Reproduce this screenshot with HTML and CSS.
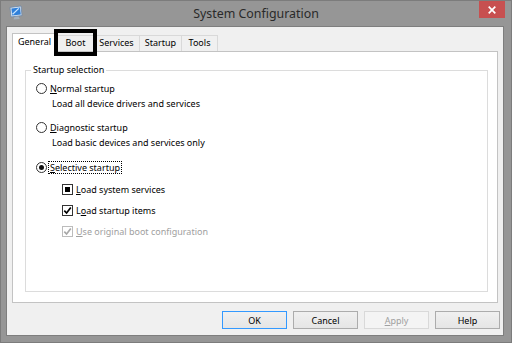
FILE: index.html
```html
<!DOCTYPE html>
<html>
<head>
<meta charset="utf-8">
<title>System Configuration</title>
<link rel="stylesheet" href="styles.css">
</head>
<body>
<div class="window">
  <div class="titlebar">
    <div class="tb-left">
      <svg class="appicon" viewBox="0 0 14 15" width="14" height="15">
        <path d="M1 2.4 L12 1 L13 10.6 L2 11.9 Z" fill="#dfe8f2" stroke="#6a87aa" stroke-width="0.8"/>
        <path d="M2.4 3.4 L11 2.4 L11.8 9.6 L3.2 10.5 Z" fill="#2f7fd9"/>
        <path d="M3.6 9.2 L9.8 3.4" stroke="#c6e3ff" stroke-width="1.3"/>
        <path d="M5.4 11.9 L9.6 11.4 L10.8 14 L4.5 14.5 Z" fill="#a3aebb"/>
      </svg>
    </div>
    <div class="title">System Configuration</div>
    <div class="tb-right">
      <div class="close">
        <svg viewBox="0 0 8 8" width="8" height="8"><path d="M0.7 0.7 L7.3 7.3 M7.3 0.7 L0.7 7.3" stroke="#fff" stroke-width="1.7"/></svg>
      </div>
    </div>
  </div>
  <div class="client">
    <div class="tabs">
      <div class="tab active t-general">General</div>
      <div class="tab t-boot">Boot</div>
      <div class="tab t-services">Services</div>
      <div class="tab t-startup">Startup</div>
      <div class="tab t-tools">Tools</div>
      <div class="mark"></div>
    </div>
    <div class="panel">
      <div class="group">
        <span class="legend">Startup selection</span>
        <div class="opt r1"><span class="radio"></span><span><u>N</u>ormal startup</span></div>
        <div class="sub">Load all device drivers and services</div>
        <div class="opt r2"><span class="radio"></span><span><u>D</u>iagnostic startup</span></div>
        <div class="sub">Load basic devices and services only</div>
        <div class="opt r3"><span class="radio on"></span><span class="focus"><u>S</u>elective startup</span></div>
        <div class="opt chk c1"><span class="box"><span class="ind"></span></span><span><u>L</u>oad system services</span></div>
        <div class="opt chk c2"><span class="box"><svg viewBox="0 0 9 9" width="9" height="9"><path d="M1.3 4.6 L3.6 7 L7.8 1.6" fill="none" stroke="#000" stroke-width="1.7"/></svg></span><span>L<u>o</u>ad startup items</span></div>
        <div class="opt chk c3 disabled"><span class="box"><svg viewBox="0 0 9 9" width="9" height="9"><path d="M1.3 4.6 L3.6 7 L7.8 1.6" fill="none" stroke="#a8a8a8" stroke-width="1.7"/></svg></span><span><u>U</u>se original boot configuration</span></div>
      </div>
    </div>
    <div class="buttons">
      <div class="btn default">OK</div>
      <div class="btn">Cancel</div>
      <div class="btn off"><span><u>A</u>pply</span></div>
      <div class="btn">Help</div>
    </div>
  </div>
</div>
</body>
</html>
```
FILE: styles.css
```css
* { box-sizing: border-box; }
html, body { margin: 0; padding: 0; }
body {
  width: 512px;
  height: 343px;
  overflow: hidden;
  background: #969696;
  font-family: "Noto Sans", "Open Sans", sans-serif;
  font-size: 9px;
  color: #000;
}
.window {
  width: 512px;
  height: 343px;
  display: flex;
  flex-direction: column;
  background: #969696;
  border: 1px solid #7c7c7c;
}
.titlebar {
  height: 25px;
  flex: none;
  display: grid;
  grid-template-columns: 1fr auto 1fr;
}
.tb-left { display: flex; align-items: flex-start; }
.appicon { margin: 4px 0 0 8px; }
.title {
  font-size: 12.4px;
  line-height: 26px;
  color: #2a2a2a;
}
.tb-right { display: flex; justify-content: flex-end; align-items: flex-start; }
.close {
  width: 26px;
  height: 17px;
  margin: 0 6px 0 0;
  background: #c75050;
  display: flex;
  align-items: center;
  justify-content: center;
}
.client {
  flex: 1;
  margin: 0 7px 6px 5px;
  border: 1px solid #7e7e7e;
  background: #f0f0f0;
  padding: 6px 3px 6px 5px;
  display: flex;
  flex-direction: column;
}
.tabs {
  height: 18px;
  flex: none;
  display: flex;
  align-items: flex-end;
  position: relative;
  z-index: 2;
}
.tab {
  height: 16px;
  line-height: 14px;
  text-align: center;
  border: 1px solid #d9d9d9;
  border-bottom: none;
  background: #f0f0f0;
  margin-left: -1px;
  white-space: nowrap;
}
.tab.active {
  height: 19px;
  margin-bottom: -1px;
  margin-left: 0;
  margin-right: 1px;
  background: #fff;
  border-color: #c3c3c3;
  line-height: 16px;
}
.t-general { width: 44px; padding-left: 1px; }
.t-boot { width: 37px; margin-left: 0; }
.t-services { width: 47px; }
.t-startup { width: 43px; }
.t-tools { width: 37px; }
.mark {
  position: absolute;
  left: 42px;
  top: -4px;
  width: 43px;
  height: 27px;
  border: 4px solid #000;
}
.panel {
  height: 252px;
  flex: none;
  margin-right: 2px;
  background: #fff;
  border: 1px solid #c3c3c3;
  padding: 18px 9px 10px 12px;
  display: flex;
}
.group {
  flex: 1;
  position: relative;
  border: 1px solid #dcdcdc;
  padding: 9px 0 0 10px;
}
.legend {
  position: absolute;
  left: 5px;
  top: -8px;
  padding: 0 2px;
  background: #fff;
  line-height: 14px;
}
.opt {
  height: 16px;
  display: flex;
  align-items: center;
  white-space: nowrap;
}
.sub {
  height: 16px;
  line-height: 16px;
  padding-left: 16px;
  white-space: nowrap;
}
.r2 { margin-top: 7px; }
.r3 { margin-top: 8px; }
.c1 { margin-top: 6px; }
.c2, .c3 { margin-top: 5px; }
.chk { padding-left: 26px; }
.radio {
  width: 11px;
  height: 11px;
  border: 1px solid #333;
  border-radius: 50%;
  background: #fff;
  margin-right: 3px;
  display: flex;
  align-items: center;
  justify-content: center;
  flex: none;
}
.radio.on::after {
  content: "";
  width: 5px;
  height: 5px;
  border-radius: 50%;
  background: #111;
}
.focus {
  outline: 1px dotted #000;
  outline-offset: 0;
  padding: 0 1px;
  line-height: 11px;
  margin-left: -1px;
}
.box {
  width: 11px;
  height: 11px;
  border: 1px solid #333;
  background: #fff;
  margin-right: 3px;
  display: flex;
  align-items: center;
  justify-content: center;
  flex: none;
}
.ind {
  width: 5px;
  height: 5px;
  background: #000;
}
.disabled { color: #a0a0a0; }
.disabled .box { border-color: #bcbcbc; }
.buttons {
  margin-top: 8px;
  display: flex;
  justify-content: flex-end;
  gap: 6px;
}
.btn {
  width: 65px;
  height: 18px;
  border: 1px solid #acacac;
  background: linear-gradient(#f0f0f0, #e5e5e5);
  display: flex;
  align-items: center;
  justify-content: center;
}
.btn.default { border-color: #3399ff; }
.btn.off {
  border-color: #d9d9d9;
  background: #f4f4f4;
  color: #a0a0a0;
}
```
